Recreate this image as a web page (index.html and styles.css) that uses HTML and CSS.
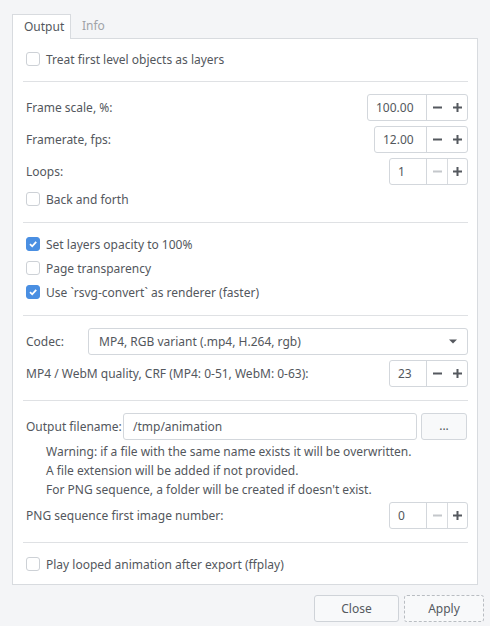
FILE: index.html
```html
<!DOCTYPE html>
<html>
<head>
<meta charset="utf-8">
<link rel="stylesheet" href="styles.css">
</head>
<body>
<div class="tabs">
  <div class="tab active">Output</div>
  <div class="tab">Info</div>
</div>
<div class="panel">
  <div class="section s1">
    <label class="check"><span class="box"></span>Treat first level objects as layers</label>
  </div>
  <div class="sep"></div>
  <div class="section s2">
    <div class="row spinrow">
      <span class="label">Frame scale, %:</span>
      <div class="spin"><span class="val w59">100.00</span><span class="btn minus"><svg width="9" height="9" viewBox="0 0 9 9"><rect x="0" y="3.5" width="9" height="2" fill="currentColor"/></svg></span><span class="btn plus"><svg width="9" height="9" viewBox="0 0 9 9"><rect x="0" y="3.5" width="9" height="2" fill="currentColor"/><rect x="3.5" y="0" width="2" height="9" fill="currentColor"/></svg></span></div>
    </div>
    <div class="row spinrow">
      <span class="label">Framerate, fps:</span>
      <div class="spin"><span class="val w52">12.00</span><span class="btn minus"><svg width="9" height="9" viewBox="0 0 9 9"><rect x="0" y="3.5" width="9" height="2" fill="currentColor"/></svg></span><span class="btn plus"><svg width="9" height="9" viewBox="0 0 9 9"><rect x="0" y="3.5" width="9" height="2" fill="currentColor"/><rect x="3.5" y="0" width="2" height="9" fill="currentColor"/></svg></span></div>
    </div>
    <div class="row spinrow">
      <span class="label">Loops:</span>
      <div class="spin"><span class="val w37">1</span><span class="btn minus disabled"><svg width="9" height="9" viewBox="0 0 9 9"><rect x="0" y="3.5" width="9" height="2" fill="currentColor"/></svg></span><span class="btn plus split"><svg width="9" height="9" viewBox="0 0 9 9"><rect x="0" y="3.5" width="9" height="2" fill="currentColor"/><rect x="3.5" y="0" width="2" height="9" fill="currentColor"/></svg></span></div>
    </div>
    <label class="check after-spin"><span class="box"></span>Back and forth</label>
  </div>
  <div class="sep"></div>
  <div class="section s3">
    <label class="check"><span class="box checked"><svg width="10" height="10" viewBox="0 0 10 10"><path d="M2 5.2 L4.2 7.3 L8.2 2.8" fill="none" stroke="#fff" stroke-width="1.8"/></svg></span>Set layers opacity to 100%</label>
    <label class="check"><span class="box"></span>Page transparency</label>
    <label class="check"><span class="box checked"><svg width="10" height="10" viewBox="0 0 10 10"><path d="M2 5.2 L4.2 7.3 L8.2 2.8" fill="none" stroke="#fff" stroke-width="1.8"/></svg></span>Use `rsvg-convert` as renderer (faster)</label>
  </div>
  <div class="sep"></div>
  <div class="section s4">
    <div class="row">
      <span class="label codec-label">Codec:</span>
      <div class="combo"><span>MP4, RGB variant (.mp4, H.264, rgb)</span><svg width="8" height="5" viewBox="0 0 8 5"><path d="M0 0.5 H8 L4 4.5 Z" fill="#55585e"/></svg></div>
    </div>
    <div class="row spinrow gap5">
      <span class="label">MP4 / WebM quality, CRF (MP4: 0-51, WebM: 0-63):</span>
      <div class="spin"><span class="val w37">23</span><span class="btn minus"><svg width="9" height="9" viewBox="0 0 9 9"><rect x="0" y="3.5" width="9" height="2" fill="currentColor"/></svg></span><span class="btn plus"><svg width="9" height="9" viewBox="0 0 9 9"><rect x="0" y="3.5" width="9" height="2" fill="currentColor"/><rect x="3.5" y="0" width="2" height="9" fill="currentColor"/></svg></span></div>
    </div>
  </div>
  <div class="sep"></div>
  <div class="section s5">
    <div class="row">
      <span class="label file-label">Output filename:</span>
      <div class="field">/tmp/animation</div>
      <div class="browse">...</div>
    </div>
    <div class="notes">
      <div>Warning: if a file with the same name exists it will be overwritten.</div>
      <div>A file extension will be added if not provided.</div>
      <div>For PNG sequence, a folder will be created if doesn't exist.</div>
    </div>
    <div class="row spinrow">
      <span class="label">PNG sequence first image number:</span>
      <div class="spin"><span class="val w37">0</span><span class="btn minus disabled"><svg width="9" height="9" viewBox="0 0 9 9"><rect x="0" y="3.5" width="9" height="2" fill="currentColor"/></svg></span><span class="btn plus split"><svg width="9" height="9" viewBox="0 0 9 9"><rect x="0" y="3.5" width="9" height="2" fill="currentColor"/><rect x="3.5" y="0" width="2" height="9" fill="currentColor"/></svg></span></div>
    </div>
  </div>
  <div class="sep"></div>
  <div class="section s6">
    <label class="check"><span class="box"></span>Play looped animation after export (ffplay)</label>
  </div>
</div>
<div class="footer">
  <div class="button close">Close</div>
  <div class="button apply">Apply</div>
</div>
</body>
</html>
```

FILE: styles.css
```css
html, body {
  margin: 0;
  padding: 0;
}
body {
  width: 490px;
  height: 626px;
  background: #f4f5f7;
  font-family: "Noto Sans", "Open Sans", sans-serif;
  font-size: 12px;
  color: #53575d;
  overflow: hidden;
}
.tabs {
  display: flex;
  margin: 14px 0 0 12px;
  height: 25px;
  margin-bottom: -1px;
  position: relative;
  z-index: 1;
}
.tab {
  height: 24px;
  line-height: 23px;
  padding: 0 11px;
  color: #a0a3a8;
  box-sizing: border-box;
}
.tab.active {
  width: 59px;
  height: 25px;
  padding: 0 0 0 11px;
  background: #fff;
  color: #53575d;
  border: 1px solid #d8dbdf;
  border-bottom: none;
}
.panel {
  margin-left: 12px;
  width: 466px;
  box-sizing: border-box;
  background: #fff;
  border: 1px solid #d8dbdf;
  padding: 0 9px 0 10px;
}
.sep {
  height: 1px;
  background: #dfe1e4;
}
.section {
  display: flex;
  flex-direction: column;
  padding-left: 3px;
}
.s1 { padding-top: 8px; padding-bottom: 10px; }
.s2 { padding-top: 12px; padding-bottom: 11px; gap: 5px; }
.s3 { padding-top: 9px; padding-bottom: 11px; }
.s4 { padding-top: 12px; padding-bottom: 13px; }
.s5 { padding-top: 12px; padding-bottom: 13px; }
.s6 { padding-top: 9px; padding-bottom: 8px; }
.check {
  display: flex;
  align-items: center;
  height: 24px;
  gap: 6px;
}
.after-spin { margin-top: -3px; }
.box {
  width: 14px;
  height: 14px;
  box-sizing: border-box;
  border: 1px solid #cdd1d6;
  border-radius: 3px;
  background: #fff;
  display: flex;
  align-items: center;
  justify-content: center;
}
.box.checked {
  background: #4a8fe2;
  border-color: #4a8fe2;
}
.row {
  display: flex;
  align-items: center;
  height: 27px;
}
.spinrow .label { flex: 1; }
.gap5 { margin-top: 5px; }
.spin {
  display: flex;
  height: 27px;
  box-sizing: border-box;
  border: 1px solid #d3d7dc;
  border-radius: 3px;
  background: #fff;
}
.val {
  box-sizing: border-box;
  border-right: 1px solid #d3d7dc;
  padding-left: 8px;
  line-height: 25px;
}
.w59 { width: 59px; }
.w52 { width: 52px; }
.w37 { width: 37px; }
.btn {
  width: 20px;
  display: flex;
  align-items: center;
  justify-content: center;
  color: #55595f;
}
.btn.disabled { color: #c4c7cb; }
.btn.split { border-left: 1px solid #d8dbdf; width: 19px; }
.codec-label { width: 62px; flex: none; }
.combo {
  flex: 1;
  height: 27px;
  box-sizing: border-box;
  border: 1px solid #d3d7dc;
  border-radius: 3px;
  display: flex;
  align-items: center;
  justify-content: space-between;
  padding: 0 10px 0 10px;
}
.file-label { width: 97px; flex: none; }
.field {
  width: 294px;
  height: 27px;
  box-sizing: border-box;
  border: 1px solid #d3d7dc;
  border-radius: 3px;
  line-height: 25px;
  padding-left: 9px;
}
.browse {
  margin-left: 4px;
  width: 46px;
  height: 27px;
  box-sizing: border-box;
  border: 1px solid #d3d7dc;
  border-radius: 3px;
  background: #f8f9fa;
  text-align: center;
  line-height: 23px;
}
.notes {
  padding-left: 20px;
  line-height: 19px;
  margin-top: 2px;
  margin-bottom: 3px;
}
.footer {
  display: flex;
  justify-content: flex-end;
  gap: 5px;
  margin-top: 10px;
  padding-right: 6px;
}
.button {
  height: 27px;
  box-sizing: border-box;
  border-radius: 3px;
  text-align: center;
  line-height: 25px;
  background: #f8f9fa;
  color: #55595f;
}
.close {
  width: 85px;
  border: 1px solid #cfd3d8;
}
.apply {
  width: 80px;
  border: 1px dashed #b9bdc2;
}
```
